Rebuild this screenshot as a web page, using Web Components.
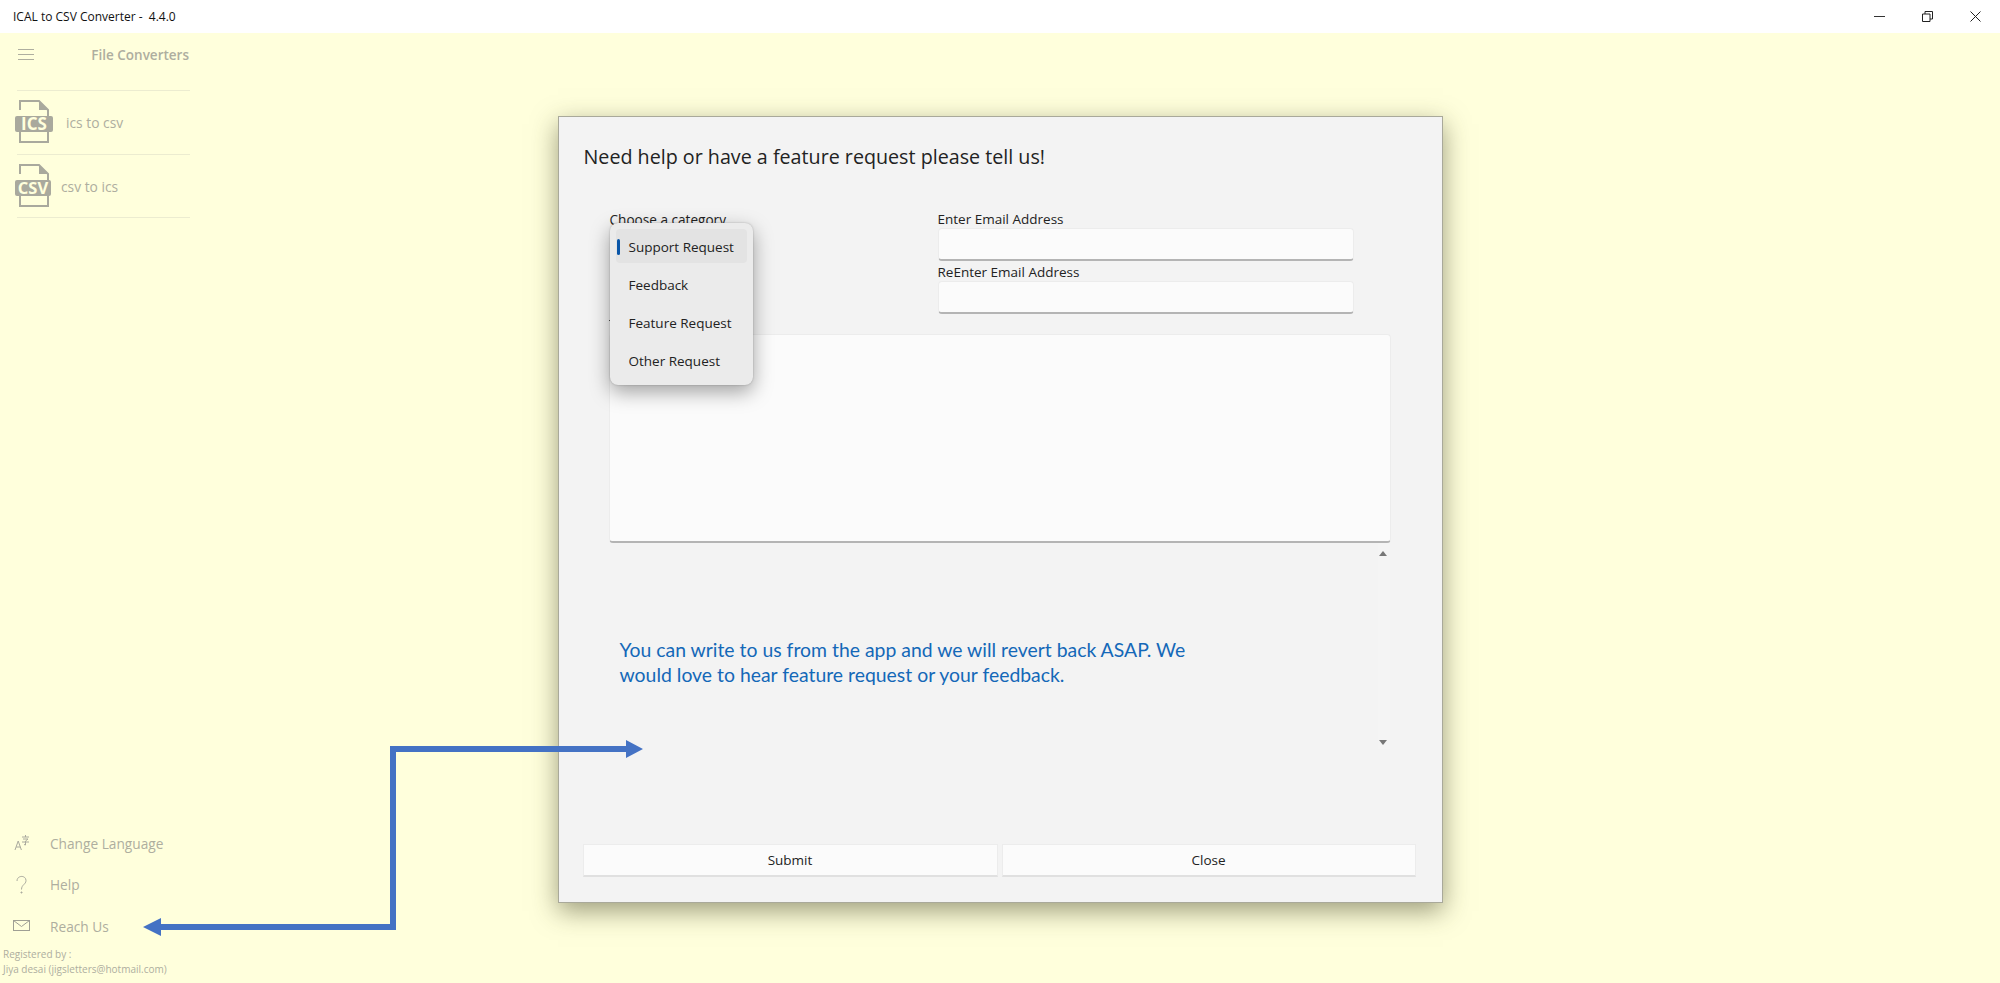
<!DOCTYPE html>
<html lang="en"><head><meta charset="utf-8"><title>ICAL to CSV Converter</title>
<style>html,body{margin:0;height:100%;overflow:hidden;background:#ffffdc}body{font-family:"Open Sans","Noto Sans",sans-serif}</style>
</head><body>
<app-shell>
  <title-bar slot="top" text="ICAL to CSV Converter -  4.4.0"></title-bar>
  <side-nav slot="side">
    <convert-row label="ics to csv" gap="11">
      <svg slot="icon" width="40" height="44" viewBox="0 0 40 44"><path d="M6 10V1h19l9 9v32H6V32" fill="none" stroke="#a9a99d" stroke-width="2"/><path d="M25 1l9 9h-9z" fill="#a9a99d"/><rect x="1" y="16" width="38" height="16" rx="2" fill="#a9a99d"/><text x="20" y="30" text-anchor="middle" font-family="Open Sans" font-weight="700" font-size="17" fill="#ffffdc">ICS</text></svg>
    </convert-row>
    <convert-row label="csv to ics" gap="6">
      <svg slot="icon" width="40" height="44" viewBox="0 0 40 44"><path d="M6 10V1h19l9 9v32H6V32" fill="none" stroke="#a9a99d" stroke-width="2"/><path d="M25 1l9 9h-9z" fill="#a9a99d"/><rect x="1" y="16" width="36" height="16" rx="2" fill="#a9a99d"/><text x="19" y="30" text-anchor="middle" font-family="Open Sans" font-weight="700" font-size="16.500" fill="#ffffdc">CSV</text></svg>
    </convert-row>
    <foot-item slot="foot" label="Change Language">
      <svg slot="icon" width="18" height="18" viewBox="0 0 18 18" fill="none" stroke="#aaaa9e" stroke-width="1"><path d="M2 16l3.200-9 3.200 9M3.200 13h4"/><path d="M9 3h7M12.500 1v2M10 5h5l-2.500 2v4l-1.500-.5M9 8h7"/></svg>
    </foot-item>
    <foot-item slot="foot" label="Help">
      <svg slot="icon" width="18" height="20" viewBox="0 0 18 20" fill="none" stroke="#aaaa9e" stroke-width="1"><path d="M4 6c0-6 9-6 9-.500 0 4-4.500 4-4.500 9"/><circle cx="8.500" cy="17.500" r=".6" fill="#aaaa9e"/></svg>
    </foot-item>
    <foot-item slot="foot" label="Reach Us">
      <svg slot="icon" width="18" height="12" viewBox="0 0 18 12" fill="none" stroke="#9f9f94" stroke-width="1"><rect x=".5" y=".5" width="16" height="10"/><path d="M.5 .5l8 6 8-6"/></svg>
    </foot-item>
    <reg-note slot="foot"></reg-note>
  </side-nav>
  <feedback-dialog slot="main"></feedback-dialog>
  <svg slot="over" width="2000" height="983" viewBox="0 0 2000 983" fill="#4472c4"><path d="M161 924H390V746H626V740L643 749 626 758V752H396V930H161V936L143 927 161 918z"/></svg>
</app-shell>
<script>
function def(name,html,init){customElements.define(name,class extends HTMLElement{constructor(){super();this.attachShadow({mode:'open'}).innerHTML=html;}connectedCallback(){init&&init.call(this,this.shadowRoot)}})}
const FF='"Open Sans","Noto Sans",sans-serif';
def('app-shell',`<style>:host{display:flex;flex-direction:column;width:2000px;height:983px;position:relative;background:#ffffdc}
.body{flex:1;display:flex;min-height:0}.side{flex:0 0 200px;display:flex}.main{flex:1;display:flex;align-items:flex-start;padding-top:83px;margin-left:-200px;justify-content:center}
.over{position:absolute;left:0;top:0;pointer-events:none;line-height:0}</style>
<slot name="top"></slot><div class="body"><div class="side"><slot name="side"></slot></div><div class="main"><slot name="main"></slot></div></div><div class="over"><slot name="over"></slot></div>`);
def('title-bar',`<style>:host{display:flex;align-items:center;height:33px;background:#fff;color:#111;padding-left:13px;font:12px/33px ${FF};white-space:pre}
.c{margin-left:auto;display:flex;padding-right:19px;gap:37px}svg{display:block}</style><span id="t"></span><div class="c">
<svg width="11" height="11" viewBox="0 0 11 11"><path d="M0 5.500h11" stroke="#333"/></svg>
<svg width="11" height="11" viewBox="0 0 11 11" fill="none" stroke="#222"><path d="M.5 3h7.500v7.500H.5zM3 3V.5h7.500V8H8"/></svg>
<svg width="11" height="11" viewBox="0 0 11 11" stroke="#222"><path d="M.5.5l10 10M10.500.5l-10 10"/></svg></div>`,function(r){r.getElementById('t').textContent=this.getAttribute('text')});
def('side-nav',`<style>:host{display:flex;flex-direction:column;width:200px;color:#aeae9f;font-family:${FF}}
.head{height:58px;box-sizing:border-box;margin-left:17px;width:173px;border-bottom:1px solid #ececd0;display:flex;justify-content:space-between;padding:16px 1px 0 1px;font-weight:600;font-size:13.500px;line-height:13px}
.h{display:block}.foot{margin-top:auto;display:flex;flex-direction:column}</style>
<div class="head"><svg class="h" width="16" height="11" viewBox="0 0 16 11" stroke="#aeae9f"><path d="M0 .5h16M0 5.500h16M0 10.500h16"/></svg><span>File Converters</span></div>
<slot></slot><div class="foot"><slot name="foot"></slot></div>`);
def('convert-row',`<style>:host{display:flex;align-items:center;box-sizing:border-box;margin-left:17px;width:173px;height:63.500px;border-bottom:1px solid #ececd0;font-size:13.800px}
::slotted(svg){margin-left:-3px;flex:none}span{margin-left:var(--g);padding-top:1px}</style><slot name="icon"></slot><span id="t"></span>`,function(r){r.getElementById('t').textContent=this.getAttribute('label');this.style.setProperty('--g',(+this.getAttribute('gap')+1)+'px')});
def('foot-item',`<style>:host{display:flex;align-items:center;height:41.500px;font-size:13.700px}.i{width:50px;display:flex;justify-content:center;padding-right:6px;box-sizing:border-box;flex:none}</style><div class="i"><slot name="icon"></slot></div><span id="t"></span>`,function(r){r.getElementById('t').textContent=this.getAttribute('label')});
def('reg-note',`<style>:host{display:block;padding:0 0 6px 3px;font-size:10px;line-height:15px;color:#aeae9f}</style><div>Registered by :</div><div>Jiya desai (jigsletters@hotmail.com)</div>`);
def('text-field',`<style>:host{display:block;font-size:13.500px;color:#222}label{display:block;height:var(--lh,19px);line-height:calc(var(--lh,19px) + 2px);white-space:nowrap}
.b{display:block;box-sizing:border-box;height:33px;width:416px;background:#fbfbfb;border:1px solid #ececec;border-bottom:2px solid #b4b4b4;border-radius:4px}</style><label id="l"></label><div class="b"></div>`,function(r){r.getElementById('l').textContent=this.getAttribute('label')});
def('flat-button',`<style>:host{display:flex;align-items:center;justify-content:center;height:33px;box-sizing:border-box;background:#fbfbfb;border:1px solid #ececec;border-bottom:2px solid #e0e0e0;font-size:13.500px;color:#222}</style><slot></slot>`);
def('menu-popup',`<style>:host{position:absolute;left:51px;top:106px;width:143px;height:162px;box-sizing:border-box;padding:6px;background:#ebebeb;border-radius:8px;box-shadow:0 7px 20px rgba(0,0,0,.36),0 0 2px rgba(0,0,0,.25);display:flex;flex-direction:column;gap:4px;font-size:13.500px;color:#222}
div{height:34px;display:flex;align-items:center;padding:1px 0 0 13px;box-sizing:border-box;border-radius:4px;position:relative;white-space:nowrap}div.on{background:#e3e3e3}
div.on::before{content:"";position:absolute;left:1px;top:10px;width:3px;height:16px;border-radius:2px;background:#0a56a8}</style>
<div class="on">Support Request</div><div>Feedback</div><div>Feature Request</div><div>Other Request</div>`);
def('feedback-dialog',`<style>:host{display:flex;flex-direction:column;position:relative;box-sizing:border-box;width:885px;height:787px;background:#f3f3f3;border:1px solid #a9a99a;box-shadow:0 8px 24px rgba(60,60,30,.5);color:#222}
h1{margin:26px 0 0 25px;font-weight:400;font-size:19.700px;line-height:28px;color:#222;white-space:nowrap}
.form{margin:38px 0 0 50px;display:grid;grid-template-columns:329px 415px}
.left{font-size:13.600px;line-height:21px;height:105px;white-space:nowrap;padding-left:1px}.tick{width:2px;height:1px;background:#555;margin:90px 0 0 -1px}
.right{display:flex;flex-direction:column}.re{--lh:20px}
.area{margin:20px 0 0 50px;box-sizing:border-box;width:782px;height:209px;background:#fbfbfb;border:1px solid #ececec;border-bottom:2px solid #b4b4b4;border-radius:4px}
.scroll{margin:0 0 0 50px;width:781px;height:206px;display:flex;box-sizing:border-box}
.msg{flex:1;padding:94px 0 0 11px;font:19.400px/25px Lato,sans-serif;color:#1468b8;white-space:nowrap}
.bar{width:12px;background:#f4f4f4;display:flex;flex-direction:column;justify-content:space-between;align-items:center;padding:8px 2px 4px 0;box-sizing:border-box}
.foot{margin:auto 0 25px 24px;display:grid;grid-template-columns:415px 414px;gap:4px}</style>
<h1>Need help or have a feature request please tell us!</h1>
<div class="form"><div class="left">Choose a category<div class="tick"></div></div><div class="right"><text-field label="Enter Email Address"></text-field><text-field class="re" label="ReEnter Email Address"></text-field></div></div>
<div class="area"></div>
<div class="scroll"><div class="msg">You can write to us from the app and we will revert back ASAP. We<br>would love to hear feature request or your feedback.</div>
<div class="bar"><svg width="8" height="5" viewBox="0 0 8 5"><path d="M4 0l4 5H0z" fill="#777"/></svg><svg width="8" height="5" viewBox="0 0 8 5"><path d="M0 0h8L4 5z" fill="#777"/></svg></div></div>
<div class="foot"><flat-button>Submit</flat-button><flat-button>Close</flat-button></div>
<menu-popup></menu-popup>`);
</script>
</body></html>
